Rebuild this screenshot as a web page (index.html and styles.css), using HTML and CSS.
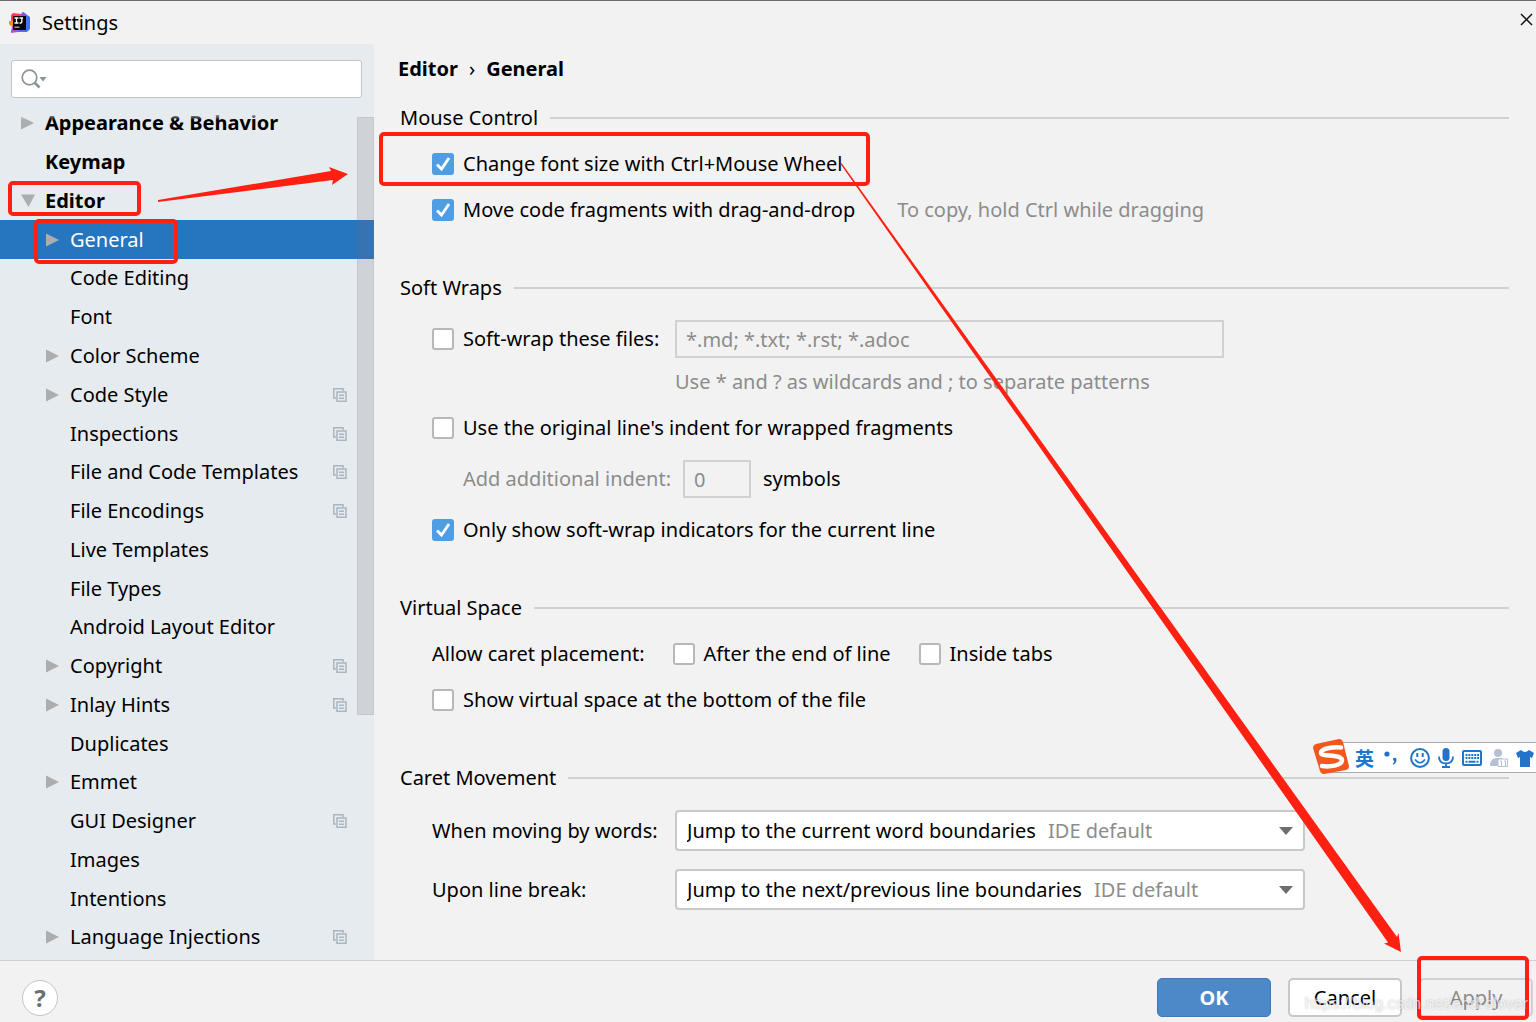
FILE: index.html
```html
<!DOCTYPE html>
<html lang="en">
<head>
  <meta charset="UTF-8">
  <title>Settings</title>
  <link rel="stylesheet" href="styles.css">
</head>
<body>

  <!-- shared icons -->
  <svg class="sprite" aria-hidden="true">
    <symbol id="closed" viewBox="0 0 14 14"><path d="M0 0.5L13 7L0 13.5Z" fill="#adadad"/></symbol>
    <symbol id="open" viewBox="0 0 14 14"><path d="M0 0.5H14L7.5 13Z" fill="#adadad"/></symbol>
    <symbol id="copy" viewBox="0 0 14 14">
      <path d="M3 10H.8V.8H10V3" fill="none" stroke="#a9b5bf" stroke-width="1.5"/>
      <rect x="4" y="4" width="9" height="9.3" fill="#e6ebef" stroke="#a9b5bf" stroke-width="1.5"/>
      <path d="M6 7.2H11M6 10.2H11" stroke="#a9b5bf" stroke-width="1.4"/>
    </symbol>
  </svg>

  <header class="titlebar">
    <svg class="app-icon" viewBox="0 0 22 22" aria-hidden="true">
      <path d="M2 3L4 1L12 2L10 20L2 20L4 14L0 12L2 9Z" fill="#fb3a62"/>
      <path d="M0 9L5 9L5 14L3 15L0 12Z" fill="#fc8c2e"/>
      <path d="M3 14L12 17L9 20L2 21Z" fill="#b648e6"/>
      <path d="M12 3L14 0L21 5L21 17L18 20L9 20Z" fill="#3f74f2"/>
      <path d="M11 3L14 0L17 2L16 4Z" fill="#8d55dd"/>
      <rect x="4" y="4" width="13" height="14" fill="#0b0508"/>
      <path d="M5.5 6H9.5M7.5 6V11M5.5 11H9.5M10.5 6H14M12.8 6V10L12 11H10.5" fill="none" stroke="#fff" stroke-width="1.3"/>
      <path d="M5.5 15.2H10.5" stroke="#bbb" stroke-width="1.2"/>
    </svg>
    <h1>Settings</h1>
    <button class="close" aria-label="Close">
      <svg viewBox="0 0 13 13"><path d="M1 1L12 12M12 1L1 12" stroke="#111" stroke-width="1.5"/></svg>
    </button>
  </header>

  <div class="content">
    <nav class="sidebar">
      <div class="search">
        <svg viewBox="0 0 26 20" aria-hidden="true">
          <circle cx="8.5" cy="8.5" r="7.3" fill="none" stroke="#8a949c" stroke-width="1.7"/>
          <path d="M13.5 13.5L18.5 18.5" stroke="#8a949c" stroke-width="2.6"/>
          <path d="M18.5 8H25.5L22 12.5Z" fill="#8a949c"/>
        </svg>
        <input type="text" aria-label="Search settings">
      </div>

      <ul class="tree">
        <li class="top"><svg class="arrow"><use href="#closed"/></svg><span>Appearance &amp; Behavior</span></li>
        <li class="top"><i class="arrow"></i><span>Keymap</span></li>
        <li class="top"><svg class="arrow"><use href="#open"/></svg><span>Editor</span></li>
        <li class="selected"><svg class="arrow"><use href="#closed"/></svg><span>General</span></li>
        <li><i class="arrow"></i><span>Code Editing</span></li>
        <li><i class="arrow"></i><span>Font</span></li>
        <li><svg class="arrow"><use href="#closed"/></svg><span>Color Scheme</span></li>
        <li><svg class="arrow"><use href="#closed"/></svg><span>Code Style</span><svg class="copy"><use href="#copy"/></svg></li>
        <li><i class="arrow"></i><span>Inspections</span><svg class="copy"><use href="#copy"/></svg></li>
        <li><i class="arrow"></i><span>File and Code Templates</span><svg class="copy"><use href="#copy"/></svg></li>
        <li><i class="arrow"></i><span>File Encodings</span><svg class="copy"><use href="#copy"/></svg></li>
        <li><i class="arrow"></i><span>Live Templates</span></li>
        <li><i class="arrow"></i><span>File Types</span></li>
        <li><i class="arrow"></i><span>Android Layout Editor</span></li>
        <li><svg class="arrow"><use href="#closed"/></svg><span>Copyright</span><svg class="copy"><use href="#copy"/></svg></li>
        <li><svg class="arrow"><use href="#closed"/></svg><span>Inlay Hints</span><svg class="copy"><use href="#copy"/></svg></li>
        <li><i class="arrow"></i><span>Duplicates</span></li>
        <li><svg class="arrow"><use href="#closed"/></svg><span>Emmet</span></li>
        <li><i class="arrow"></i><span>GUI Designer</span><svg class="copy"><use href="#copy"/></svg></li>
        <li><i class="arrow"></i><span>Images</span></li>
        <li><i class="arrow"></i><span>Intentions</span></li>
        <li><svg class="arrow"><use href="#closed"/></svg><span>Language Injections</span><svg class="copy"><use href="#copy"/></svg></li>
      </ul>
      <div class="scrollbar"></div>
    </nav>

    <main class="panel">
      <div class="breadcrumb"><b>Editor</b><span>›</span><b>General</b></div>

      <section>
        <h2>Mouse Control</h2>
        <div class="rows">
          <div class="row"><label><input type="checkbox" checked>Change font size with Ctrl+Mouse Wheel</label></div>
          <div class="row"><label><input type="checkbox" checked>Move code fragments with drag-and-drop</label><span class="hint comment">To copy, hold Ctrl while dragging</span></div>
        </div>
      </section>

      <section>
        <h2>Soft Wraps</h2>
        <div class="rows">
          <div class="files">
            <label><input type="checkbox">Soft-wrap these files:</label>
            <input class="field" type="text" value="*.md; *.txt; *.rst; *.adoc" aria-label="File patterns" disabled>
            <span class="hint">Use * and ? as wildcards and ; to separate patterns</span>
          </div>
          <div class="row"><label><input type="checkbox">Use the original line's indent for wrapped fragments</label></div>
          <div class="row nested">
            <label class="hint" for="indent">Add additional indent:</label>
            <input class="field short" id="indent" type="text" value="0" disabled>
            <span>symbols</span>
          </div>
          <div class="row"><label><input type="checkbox" checked>Only show soft-wrap indicators for the current line</label></div>
        </div>
      </section>

      <section>
        <h2>Virtual Space</h2>
        <div class="rows">
          <div class="row caret">
            <span>Allow caret placement:</span>
            <label><input type="checkbox">After the end of line</label>
            <label><input type="checkbox">Inside tabs</label>
          </div>
          <div class="row"><label><input type="checkbox">Show virtual space at the bottom of the file</label></div>
        </div>
      </section>

      <section>
        <h2>Caret Movement</h2>
        <div class="rows">
          <div class="choice">
            <label for="words">When moving by words:</label>
            <div class="combo">
              <select id="words"><option>Jump to the current word boundaries</option></select>
              <span class="hint">IDE default</span>
              <svg viewBox="0 0 14 8"><path d="M0 0H14L7 8Z" fill="#6e6e6e"/></svg>
            </div>
          </div>
          <div class="choice">
            <label for="break">Upon line break:</label>
            <div class="combo">
              <select id="break"><option>Jump to the next/previous line boundaries</option></select>
              <span class="hint">IDE default</span>
              <svg viewBox="0 0 14 8"><path d="M0 0H14L7 8Z" fill="#6e6e6e"/></svg>
            </div>
          </div>
        </div>
      </section>
    </main>
  </div>

  <footer class="actions">
    <button class="help" aria-label="Help">?</button>
    <button class="btn primary">OK</button>
    <button class="btn">Cancel</button>
    <button class="btn" disabled>Apply</button>
  </footer>

  <!-- input method bar floating over the dialog -->
  <div class="ime">
    <svg class="ime-logo" viewBox="0 0 36 36" aria-hidden="true">
      <path d="M3 5L26 0Q29 0 30 3L36 27Q36 30 33 31L11 35Q8 35 7 32L0 9Q0 6 3 5Z" fill="#f4561d"/>
      <path d="M28 8.500C20 8 8 9 8 14C8 18 28 15 29 21C29 27 16 28 9 27" fill="none" stroke="#fff" stroke-width="4.500" stroke-linecap="round"/>
    </svg>
    <span class="ime-lang" lang="zh">英</span>
    <svg viewBox="0 0 20 20" width="20" height="20" aria-hidden="true"><circle cx="5" cy="6" r="2.600" fill="#2274c8"/><path d="M11 10.500a2 2 0 0 1 3.600 1.200q0 3.500-3.400 5l-.6-1q1.600-1 1.700-2.600q-1.500-.8-1.300-2.600" fill="#2274c8"/></svg>
    <svg viewBox="0 0 20 20" width="20" height="20" aria-hidden="true"><circle cx="10" cy="10" r="8.900" fill="none" stroke="#2274c8" stroke-width="2"/><path d="M7.300 5V9M12.700 5V9" stroke="#2274c8" stroke-width="2"/><path d="M5 11.500Q10 18 15 11.500" fill="none" stroke="#2274c8" stroke-width="1.700"/></svg>
    <svg viewBox="0 0 16 20" width="16" height="20" aria-hidden="true"><rect x="4.500" y="0" width="7" height="13" rx="3.500" fill="#2274c8"/><path d="M1 8.500Q1 15.500 8 15.500T15 8.500M8 15V19M4 19H12" fill="none" stroke="#2274c8" stroke-width="1.800"/></svg>
    <svg viewBox="0 0 20 16" width="20" height="16" aria-hidden="true"><rect x="1" y="1" width="18" height="14" rx="1" fill="none" stroke="#2274c8" stroke-width="2"/><path d="M3.500 5H17M3.500 8H17" stroke="#2274c8" stroke-width="2" stroke-dasharray="2 .9"/><path d="M3.500 11.700H5.500M6.500 11.700H13.500M14.500 11.700H16.500" stroke="#2274c8" stroke-width="2"/></svg>
    <svg viewBox="0 0 18 18" width="18" height="18" aria-hidden="true"><circle cx="8" cy="4" r="4" fill="#b5c0d3"/><path d="M0 17Q0 9 7 9H12V17Z" fill="#b5c0d3"/><path d="M8 10H17.500V17.500H8ZM10 12H11.500V17M14 12H15.500V17" fill="#fff" stroke="#b5c0d3"/></svg>
    <svg viewBox="0 0 18 18" width="18" height="18" aria-hidden="true"><path d="M5 1Q9 5 13 1L18 4L16 9L14 8V18H4V8L2 9L0 4Z" fill="#2274c8"/></svg>
  </div>

  <!-- red markup: frames and arrows -->
  <svg class="markup" width="1536" height="1022" aria-hidden="true">
    <g fill="none" stroke="#ff2012" stroke-width="4">
      <rect x="10" y="183" width="129" height="31" rx="3"/>
      <rect x="36" y="221" width="140" height="41" rx="3"/>
      <rect x="381" y="134" width="487" height="50" rx="3"/>
      <rect x="1419" y="958" width="108" height="60" rx="3"/>
    </g>
    <g fill="#ff2012">
      <path d="M158 200L331 171L329 167L348 174L332 185L333 180L158 202Z"/>
      <path d="M841.500 163L1397 937L1398.500 933L1401 952L1384 943.500L1388 942.500L840.500 164Z"/>
    </g>
  </svg>
  <div class="watermark">https://blog.csdn.net/andrelover</div>

</body>
</html>
```
FILE: styles.css
```css
* {
  box-sizing: border-box;
}
body {
  position: relative;
  display: flex;
  flex-direction: column;
  min-height: 100vh;
  margin: 0;
  overflow: hidden;
  background: #f2f2f2;
  color: #000;
  font: 20px/28px "Noto Sans", sans-serif;
}
input, select, button {
  font: inherit;
  color: inherit;
}
.sprite {
  position: absolute;
  width: 0;
  height: 0;
}

/* title bar */
.titlebar {
  display: flex;
  align-items: center;
  height: 44px;
  padding: 0 3px 0 9px;
  border-top: 1px solid #6e6c6e;
}
.app-icon {
  width: 22px;
  height: 22px;
}
.titlebar h1 {
  margin: 0 auto 0 11px;
  font-size: 20px;
  font-weight: 400;
}
.close {
  display: flex;
  align-self: flex-start;
  margin-top: 12px;
  padding: 0;
  border: 0;
  background: none;
}
.close svg {
  width: 13px;
  height: 13px;
}

.content {
  display: flex;
  flex: 1;
}

/* settings tree */
.sidebar {
  position: relative;
  display: flex;
  flex-direction: column;
  width: 374px;
  padding: 16px 0 3px;
  background: #e6ebef;
}
.search {
  display: flex;
  align-items: center;
  height: 38px;
  margin: 0 12px 6px 11px;
  padding-left: 9px;
  background: #fff;
  border: 1px solid #c4c4c4;
  border-radius: 3px;
}
.search svg {
  width: 26px;
  height: 20px;
}
.search input {
  flex: 1;
  min-width: 0;
  border: 0;
  outline: 0;
  background: none;
}
.tree {
  position: relative;
  display: flex;
  flex-direction: column;
  flex: 1;
  margin: 0;
  padding: 0;
  list-style: none;
}
/* fade of the scrolled list under the search box */
.tree::before {
  content: "";
  position: absolute;
  top: 0;
  left: 0;
  right: 0;
  height: 16px;
  background: linear-gradient(#e6ebef 50%, rgba(230, 235, 239, 0));
}
.tree li {
  display: flex;
  flex: 1;
  align-items: center;
  gap: 10px;
  padding: 0 27px 0 46px;
}
.tree li.top {
  padding-left: 21px;
  font-weight: 700;
}
.tree li.selected {
  background: #2675bf;
  color: #fff;
}
.arrow {
  width: 14px;
  height: 14px;
}
.copy {
  width: 14px;
  height: 14px;
  margin-left: auto;
}
.scrollbar {
  position: absolute;
  top: 73px;
  right: 0;
  width: 17px;
  height: 598px;
  background: rgba(115, 115, 125, 0.2);
  border: 1px solid rgba(115, 115, 125, 0.1);
}

/* right side */
.panel {
  flex: 1;
  padding: 11px 27px 0 26px;
}
.breadcrumb {
  display: flex;
  gap: 11px;
  margin: 0 0 21px -2px;
}
section {
  margin-bottom: 50px;
}
h2 {
  display: flex;
  align-items: center;
  gap: 12px;
  margin: 0 0 18px;
  font-size: 20px;
  font-weight: 400;
}
h2::after {
  content: "";
  flex: 1;
  height: 2px;
  background: #d1d1d1;
}
.rows {
  display: flex;
  flex-direction: column;
  gap: 18px;
  padding-left: 32px;
}
.row, .row label, .files label {
  display: flex;
  align-items: center;
}
input[type="checkbox"] {
  appearance: none;
  width: 22px;
  height: 22px;
  margin: 0 9px 0 0;
  background: #fff;
  border: 2px solid #b8b8b8;
  border-radius: 3px;
}
input[type="checkbox"]:checked {
  border: 0;
  background: #4f9ee3 url("data:image/svg+xml,%3Csvg xmlns='http://www.w3.org/2000/svg' viewBox='0 0 22 22'%3E%3Cpath d='M5 11.500L9.500 16L17 5' fill='none' stroke='white' stroke-width='2.800'/%3E%3C/svg%3E");
}
.hint {
  color: #8c8c8c;
}
.comment {
  margin-left: 42px;
}
.field {
  height: 38px;
  padding: 0 9px;
  background: #f2f2f2;
  border: 2px solid #d1d1d1;
  color: #8c8c8c;
}
.files {
  display: grid;
  grid-template-columns: 243px 549px;
  row-gap: 10px;
}
.files .hint {
  grid-column: 2;
}
.nested {
  gap: 12px;
  padding-left: 31px;
}
.short {
  width: 68px;
}
.caret {
  gap: 28px;
}
.choice {
  display: grid;
  grid-template-columns: 243px 630px;
  align-items: center;
}
.combo {
  display: flex;
  align-items: center;
  gap: 12px;
  height: 41px;
  padding: 0 10px 0 6px;
  background: #fff;
  border: 2px solid #c8c8c8;
  border-radius: 4px;
}
.combo select {
  appearance: none;
  padding: 0 0 0 4px;
  border: 0;
  outline: 0;
  overflow: visible;
  background: none;
}
.combo svg {
  width: 14px;
  height: 8px;
  margin-left: auto;
}

/* bottom buttons */
.actions {
  display: flex;
  align-items: center;
  gap: 17px;
  height: 62px;
  padding: 12px 3px 0 22px;
  border-top: 1px solid #d1d1d1;
}
.help {
  width: 36px;
  height: 36px;
  margin-right: auto;
  padding: 0;
  background: #fff;
  border: 1px solid #c4c4c4;
  border-radius: 50%;
  color: #6e6e6e;
  font-size: 24px;
  font-weight: 700;
}
.btn {
  width: 114px;
  height: 39px;
  padding: 0;
  background: #fff;
  border: 2px solid #c8c8c8;
  border-radius: 5px;
}
.btn.primary {
  background: #4d89c9;
  border: 1px solid #4279b5;
  color: #fff;
  font-weight: 700;
}
.btn:disabled {
  background: #f2f2f2;
  border-color: #d1d1d1;
  color: #8c8c8c;
}

/* floating layers */
.ime {
  position: absolute;
  top: 742px;
  right: 0;
  display: flex;
  align-items: center;
  gap: 8px;
  width: 208px;
  height: 31px;
  padding-left: 26px;
  background: #fff;
  border: 1px solid #a9a9b3;
  border-right: 0;
}
.ime svg {
  flex: none;
}
.ime-logo {
  position: absolute;
  top: -4px;
  left: -16px;
  width: 36px;
  height: 36px;
}
.ime-lang {
  color: #2274c8;
  font: 700 19px/28px "Noto Sans CJK SC", sans-serif;
}
.markup {
  position: absolute;
  top: 0;
  left: 0;
  pointer-events: none;
}
.watermark {
  position: absolute;
  right: 8px;
  bottom: 4px;
  color: rgba(255, 255, 255, 0.7);
  font: 16px/28px "Liberation Sans", sans-serif;
  text-shadow: 0 0 2px rgba(0, 0, 0, 0.25);
  pointer-events: none;
}
```
